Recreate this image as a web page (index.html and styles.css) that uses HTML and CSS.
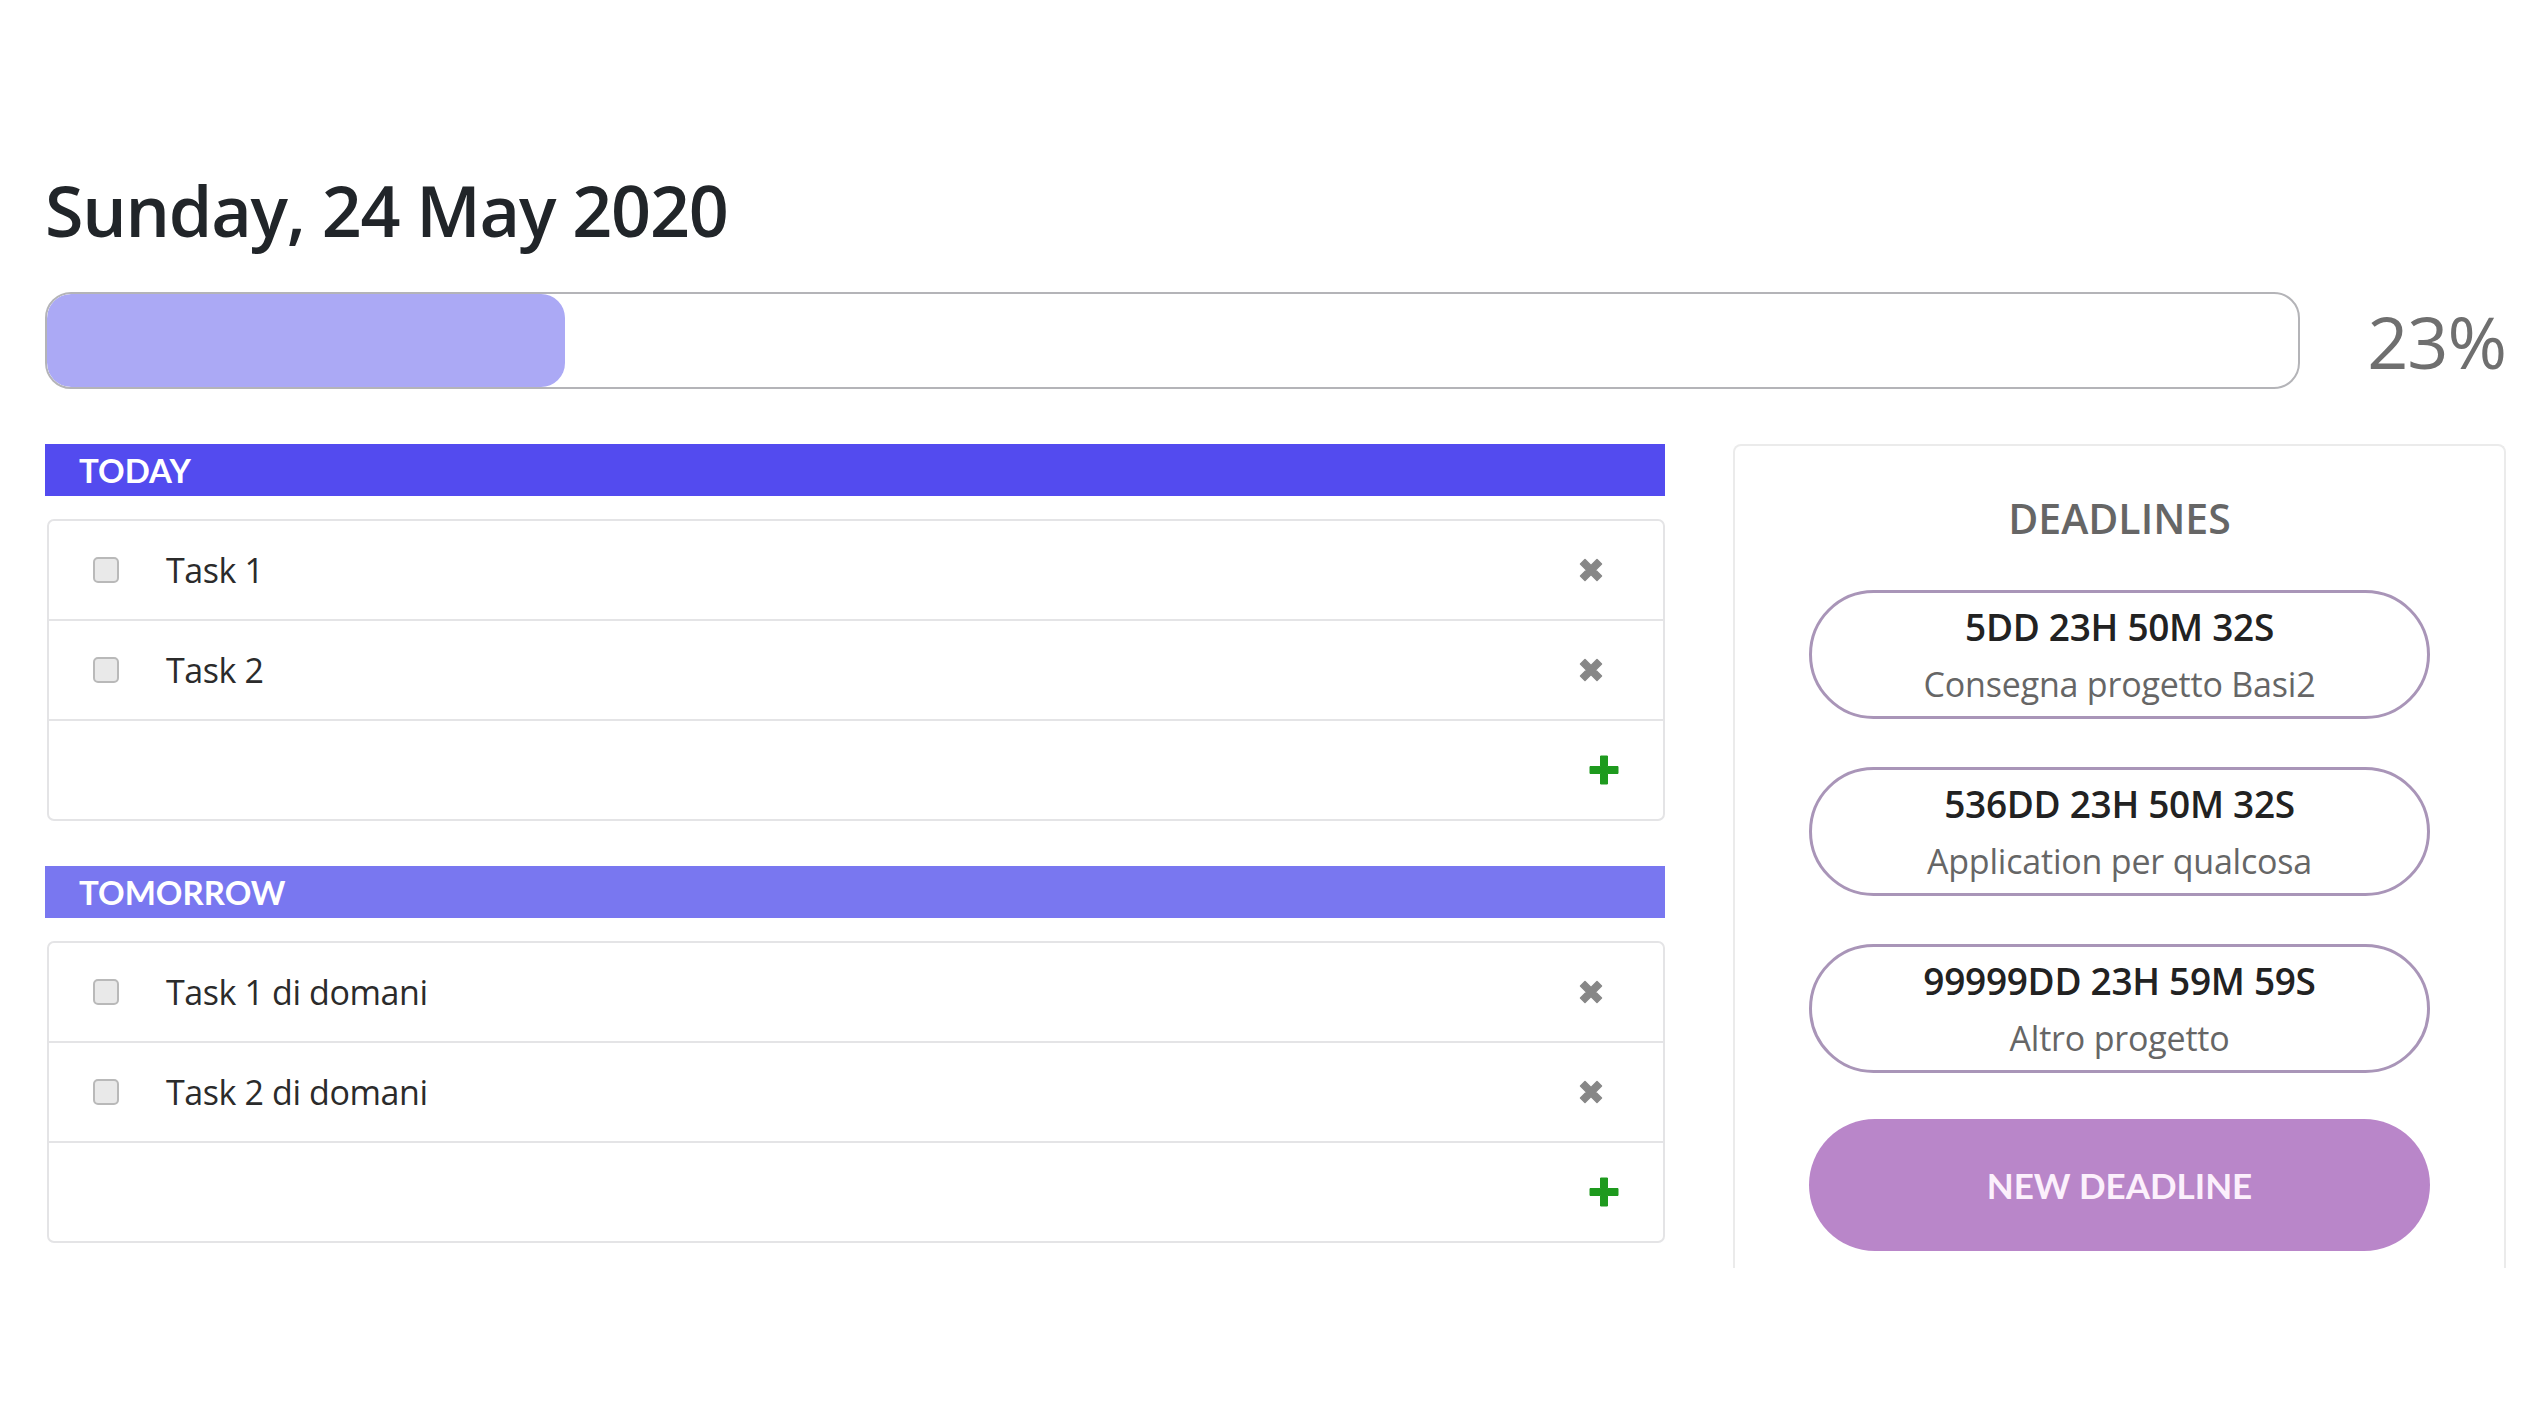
FILE: index.html
```html
<!DOCTYPE html>
<html lang="it">
<head>
<meta charset="utf-8">
<title>Planner</title>
<link rel="stylesheet" href="styles.css">
</head>
<body>
<main class="page">
  <h1 class="date">Sunday, 24 May 2020</h1>

  <div class="progress-row">
    <div class="progress"><div class="progress-fill" style="width:23%"></div></div>
    <span class="progress-label">23%</span>
  </div>

  <div class="content">
    <section class="days">
      <div class="day">
        <h2 class="day-header today">TODAY</h2>
        <ul class="task-card">
          <li class="task">
            <span class="check"></span>
            <span class="task-name">Task 1</span>
            <span class="del"><svg viewBox="0 0 24 24" width="24" height="24"><path d="M1.5 6 L6 1.5 L12 7.5 L18 1.5 L22.5 6 L16.5 12 L22.5 18 L18 22.5 L12 16.5 L6 22.5 L1.5 18 L7.5 12 Z" fill="#878787" stroke="#878787" stroke-width="1.5" stroke-linejoin="round"/></svg></span>
          </li>
          <li class="task">
            <span class="check"></span>
            <span class="task-name">Task 2</span>
            <span class="del"><svg viewBox="0 0 24 24" width="24" height="24"><path d="M1.5 6 L6 1.5 L12 7.5 L18 1.5 L22.5 6 L16.5 12 L22.5 18 L18 22.5 L12 16.5 L6 22.5 L1.5 18 L7.5 12 Z" fill="#878787" stroke="#878787" stroke-width="1.5" stroke-linejoin="round"/></svg></span>
          </li>
          <li class="task add-row">
            <span class="add"><svg viewBox="0 0 30 30" width="30" height="30"><path d="M11.5 1 H18.5 V11.5 H29 V18.5 H18.5 V29 H11.5 V18.5 H1 V11.5 H11.5 Z" fill="#1e9a1e" stroke="#1e9a1e" stroke-width="1" stroke-linejoin="round"/></svg></span>
          </li>
        </ul>
      </div>

      <div class="day">
        <h2 class="day-header tomorrow">TOMORROW</h2>
        <ul class="task-card">
          <li class="task">
            <span class="check"></span>
            <span class="task-name">Task 1 di domani</span>
            <span class="del"><svg viewBox="0 0 24 24" width="24" height="24"><path d="M1.5 6 L6 1.5 L12 7.5 L18 1.5 L22.5 6 L16.5 12 L22.5 18 L18 22.5 L12 16.5 L6 22.5 L1.5 18 L7.5 12 Z" fill="#878787" stroke="#878787" stroke-width="1.5" stroke-linejoin="round"/></svg></span>
          </li>
          <li class="task">
            <span class="check"></span>
            <span class="task-name">Task 2 di domani</span>
            <span class="del"><svg viewBox="0 0 24 24" width="24" height="24"><path d="M1.5 6 L6 1.5 L12 7.5 L18 1.5 L22.5 6 L16.5 12 L22.5 18 L18 22.5 L12 16.5 L6 22.5 L1.5 18 L7.5 12 Z" fill="#878787" stroke="#878787" stroke-width="1.5" stroke-linejoin="round"/></svg></span>
          </li>
          <li class="task add-row">
            <span class="add"><svg viewBox="0 0 30 30" width="30" height="30"><path d="M11.5 1 H18.5 V11.5 H29 V18.5 H18.5 V29 H11.5 V18.5 H1 V11.5 H11.5 Z" fill="#1e9a1e" stroke="#1e9a1e" stroke-width="1" stroke-linejoin="round"/></svg></span>
          </li>
        </ul>
      </div>
    </section>

    <aside class="deadlines">
      <h3 class="deadlines-title">DEADLINES</h3>
      <div class="deadline">
        <div class="deadline-time">5DD 23H 50M 32S</div>
        <div class="deadline-name">Consegna progetto Basi2</div>
      </div>
      <div class="deadline">
        <div class="deadline-time">536DD 23H 50M 32S</div>
        <div class="deadline-name">Application per qualcosa</div>
      </div>
      <div class="deadline">
        <div class="deadline-time">99999DD 23H 59M 59S</div>
        <div class="deadline-name">Altro progetto</div>
      </div>
      <button class="new-deadline">NEW DEADLINE</button>
    </aside>
  </div>
</main>
</body>
</html>
```

FILE: styles.css
```css
* { box-sizing: border-box; }

html, body {
  margin: 0;
  padding: 0;
  background: #ffffff;
}

body {
  font-family: "Open Sans", "Noto Sans", "DejaVu Sans", sans-serif;
  color: #212529;
}

.page {
  width: 2533px;
  padding: 168px 27px 0 45px;
}

.date {
  margin: 0;
  font-size: 70px;
  line-height: 84px;
  font-weight: 600;
  color: #212529;
  letter-spacing: -1.2px;
}

.progress-row {
  margin-top: 40px;
  display: flex;
  align-items: center;
  gap: 67px;
}

.progress {
  width: 2256px;
  height: 97px;
  border: 2px solid #b4b4b8;
  border-radius: 26px;
  overflow: hidden;
  background: #ffffff;
}

.progress-fill {
  height: 100%;
  background: #aba9f5;
  border-radius: 24px;
}

.progress-label {
  font-size: 72px;
  line-height: 1;
  color: #6f6f6f;
  font-weight: 500;
  letter-spacing: -1px;
}

.content {
  margin-top: 55px;
  display: flex;
  gap: 68px;
  align-items: flex-start;
}

.days {
  width: 1620px;
  display: flex;
  flex-direction: column;
  gap: 45px;
}

.day-header {
  margin: 0;
  height: 52px;
  padding-left: 34px;
  display: flex;
  align-items: center;
  font-family: "Lato", "Open Sans", sans-serif;
  font-weight: 700;
  font-size: 33px;
  color: #ffffff;
}

.day-header.today { background: #534bef; }
.day-header.tomorrow { background: #7977f0; }

.task-card {
  list-style: none;
  margin: 23px 0 0 2px;
  padding: 0;
  border: 2px solid #e4e4e6;
  border-radius: 7px;
}

.task {
  height: 100px;
  display: flex;
  align-items: center;
  padding: 0 60px 0 44px;
  border-bottom: 2px solid #e4e4e6;
}

.task:last-child { border-bottom: none; height: 98px; }

.check {
  width: 26px;
  height: 26px;
  border: 2px solid #b9b9b9;
  border-radius: 5px;
  background: #e9e9e9;
  flex: none;
}

.task-name {
  margin-left: 47px;
  font-size: 34px;
  letter-spacing: -0.4px;
  color: #2b2b2b;
  flex: 1;
}

.del {
  display: flex;
  width: 24px;
  height: 24px;
}

.add-row {
  justify-content: flex-end;
  padding-right: 44px;
}

.add {
  display: flex;
  width: 30px;
  height: 30px;
}

.deadlines {
  width: 773px;
  height: 824px;
  border: 2px solid #ebebeb;
  border-bottom: none;
  border-radius: 8px 8px 0 0;
  padding: 48px 74px 0 74px;
  display: flex;
  flex-direction: column;
  align-items: stretch;
}

.deadlines-title {
  margin: 0 0 47px 0;
  text-align: center;
  font-size: 41px;
  line-height: 49px;
  font-weight: 600;
  color: #666666;
}

.deadline {
  height: 129px;
  border: 3px solid #a995b8;
  border-radius: 65px;
  margin-bottom: 48px;
  display: flex;
  flex-direction: column;
  align-items: center;
  justify-content: center;
  text-align: center;
}

.deadline-time {
  font-size: 37px;
  line-height: 52px;
  font-weight: 600;
  color: #222222;
  letter-spacing: -0.3px;
}

.deadline-name {
  margin-top: 6px;
  font-size: 34px;
  line-height: 50px;
  color: #666666;
  letter-spacing: -0.2px;
}

.new-deadline {
  margin-top: -2px;
  height: 132px;
  border: none;
  border-radius: 66px;
  background: #b986c9;
  color: #fcf0fc;
  font-family: "Lato", "Open Sans", sans-serif;
  font-weight: 700;
  font-size: 35px;
  cursor: pointer;
}
```
